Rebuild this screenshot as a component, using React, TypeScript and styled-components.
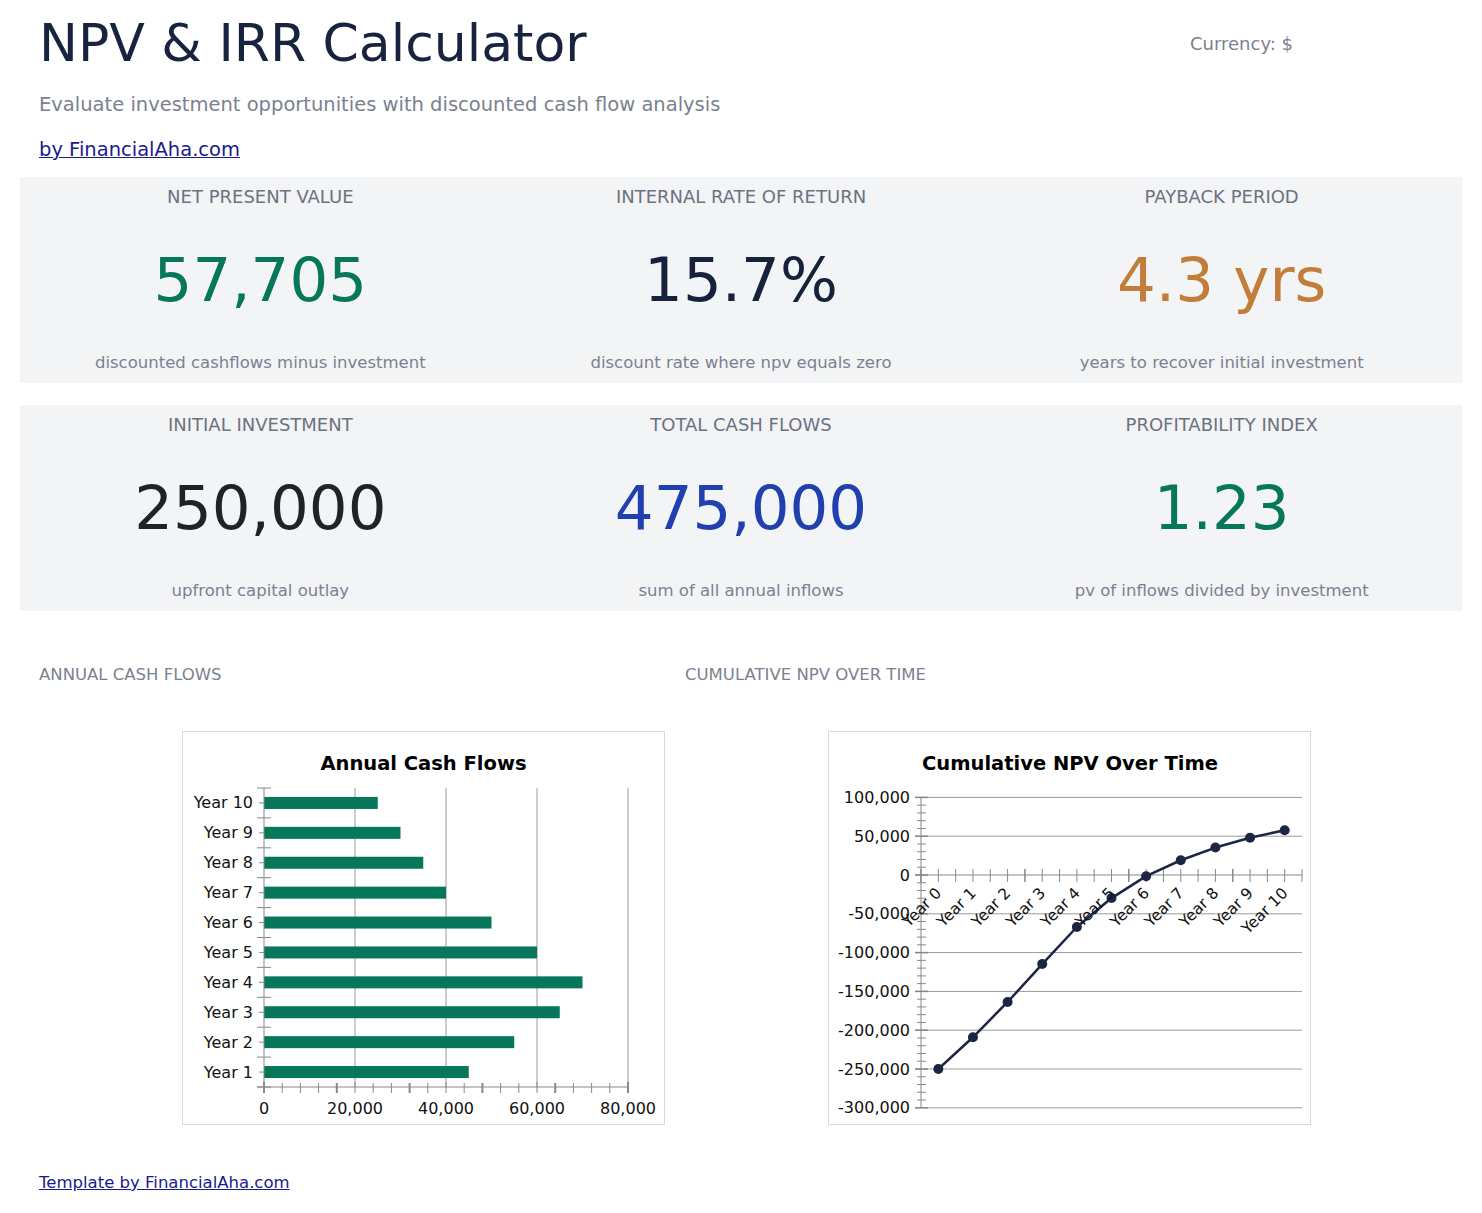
import styled, { createGlobalStyle } from 'styled-components';

const GlobalStyle = createGlobalStyle`
  body {
    margin: 0;
    background: #ffffff;
    font-family: 'DejaVu Sans', Verdana, sans-serif;
  }
`;

const FONT = "'DejaVu Sans', Verdana, sans-serif";

interface Metric {
  label: string;
  value: string;
  note: string;
  color: string;
}

const TOP_METRICS: Metric[] = [
  { label: 'NET PRESENT VALUE', value: '57,705', note: 'discounted cashflows minus investment', color: '#06775a' },
  { label: 'INTERNAL RATE OF RETURN', value: '15.7%', note: 'discount rate where npv equals zero', color: '#16213a' },
  { label: 'PAYBACK PERIOD', value: '4.3 yrs', note: 'years to recover initial investment', color: '#c27d3b' },
];

const BOTTOM_METRICS: Metric[] = [
  { label: 'INITIAL INVESTMENT', value: '250,000', note: 'upfront capital outlay', color: '#1f2226' },
  { label: 'TOTAL CASH FLOWS', value: '475,000', note: 'sum of all annual inflows', color: '#1f40ae' },
  { label: 'PROFITABILITY INDEX', value: '1.23', note: 'pv of inflows divided by investment', color: '#06775a' },
];

const FLOWS = [45000, 55000, 65000, 70000, 60000, 50000, 40000, 35000, 30000, 25000];
const RATE = 0.1;
const INVESTMENT = 250000;

const Page = styled.div`
  padding: 0 20px;
`;

const Header = styled.header`
  padding: 12px 19px 0;
`;

const TitleRow = styled.div`
  display: flex;
  align-items: center;
  justify-content: space-between;
  padding-right: 150px;
`;

const Title = styled.h1`
  margin: 0;
  font-size: 52px;
  line-height: 62px;
  font-weight: 400;
  color: #18233f;
`;

const Currency = styled.span`
  font-size: 18px;
  color: #7a8190;
`;

const Subtitle = styled.p`
  margin: 19px 0 0;
  font-size: 19.5px;
  line-height: 24px;
  color: #7a8190;
`;

const ByLine = styled.a`
  display: inline-block;
  margin-top: 21px;
  font-size: 19.5px;
  line-height: 24px;
  color: #1a1a8c;
  text-decoration: underline;
`;

const MetricRow = styled.section<{ $top: number }>`
  display: grid;
  grid-template-columns: repeat(3, 1fr);
  margin-top: ${(p) => p.$top}px;
  background: #f3f4f6;
  height: 206px;
`;

const MetricCell = styled.div`
  display: flex;
  flex-direction: column;
  align-items: center;
  padding-top: 8px;
`;

const MetricLabel = styled.div`
  font-size: 18px;
  line-height: 24px;
  color: #6b7280;
`;

const MetricValue = styled.div<{ $color: string }>`
  margin-top: 35px;
  font-size: 61px;
  line-height: 72px;
  color: ${(p) => p.$color};
`;

const MetricNote = styled.div`
  margin-top: 36px;
  font-size: 16.5px;
  line-height: 22px;
  color: #7a8190;
`;

const ChartGrid = styled.section`
  display: grid;
  grid-template-columns: 646px 646px;
  margin-top: 53px;
`;

const ChartColumn = styled.div`
  padding: 0 19px;
`;

const SectionLabel = styled.div`
  font-size: 16.5px;
  line-height: 22px;
  color: #7a8190;
`;

const ChartFrame = styled.div`
  margin: 45px 0 0 143px;
  width: 481px;
  height: 392px;
  border: 1px solid #d9d9d9;
  background: #ffffff;

  svg {
    display: block;
    font-family: ${FONT};
  }
`;

const Footer = styled.footer`
  margin-top: 47px;
  padding: 0 19px 20px;
`;

const FooterLink = styled.a`
  font-size: 16.5px;
  line-height: 22px;
  color: #1a1a8c;
  text-decoration: underline;
`;

const fmt = (n: number) => n.toLocaleString('en-US');

const MetricsBlock = ({ items, top }: { items: Metric[]; top: number }) => (
  <MetricRow $top={top}>
    {items.map((m) => (
      <MetricCell key={m.label}>
        <MetricLabel>{m.label}</MetricLabel>
        <MetricValue $color={m.color}>{m.value}</MetricValue>
        <MetricNote>{m.note}</MetricNote>
      </MetricCell>
    ))}
  </MetricRow>
);

const BarChart = () => {
  const x0 = 81;
  const perUnit = 91 / 20000;
  const top = 56;
  const step = 29.9;
  const axisY = 355;
  const rows = FLOWS.map((v, i) => ({ label: `Year ${i + 1}`, value: v })).reverse();

  return (
    <svg width="481" height="392" viewBox="0 0 481 392">
      <text x="240.5" y="38" textAnchor="middle" fontSize="19.5" fontWeight="700" fill="#000">
        Annual Cash Flows
      </text>
      {[1, 2, 3, 4].map((k) => (
        <line key={k} x1={x0 + 91 * k} y1={top} x2={x0 + 91 * k} y2={axisY} stroke="#9a9a9a" strokeWidth="1" />
      ))}
      {rows.map((r, i) => {
        const cy = top + step * (i + 0.5);
        return (
          <g key={r.label}>
            <rect x={x0} y={cy - 6} width={r.value * perUnit} height="12" fill="#06775a" />
            <line x1={x0 - 5} y1={cy} x2={x0} y2={cy} stroke="#888" />
            <text x="70" y={cy + 5.5} textAnchor="end" fontSize="16" fill="#111">
              {r.label}
            </text>
          </g>
        );
      })}
      {Array.from({ length: 11 }, (_, i) => (
        <line key={i} x1={x0 - 7} y1={top + step * i} x2={x0 + 7} y2={top + step * i} stroke="#888" strokeWidth="1" />
      ))}
      <line x1={x0} y1={top} x2={x0} y2={axisY + 5} stroke="#888" />
      <line x1={x0 - 7} y1={axisY} x2={x0 + 91 * 4} y2={axisY} stroke="#888" />
      {Array.from({ length: 21 }, (_, i) => (
        <line
          key={i}
          x1={x0 + i * 18.2}
          y1={i % 5 === 0 ? axisY - 5 : axisY - 4}
          x2={x0 + i * 18.2}
          y2={axisY + 6}
          stroke="#888"
          strokeWidth={i % 4 === 0 ? 2 : 1}
        />
      ))}
      {[0, 20000, 40000, 60000, 80000].map((v) => (
        <text key={v} x={x0 + v * perUnit} y="382" textAnchor="middle" fontSize="16" fill="#111">
          {fmt(v)}
        </text>
      ))}
    </svg>
  );
};

const LineChart = () => {
  const zeroY = 143;
  const perUnit = 38.8 / 50000;
  const axisX = 92;
  const right = 473;
  const cat = (right - axisX) / 11;
  const toY = (v: number) => zeroY - v * perUnit;

  const points: { label: string; value: number }[] = [{ label: 'Year 0', value: -INVESTMENT }];
  let acc = -INVESTMENT;
  FLOWS.forEach((f, i) => {
    acc += f / Math.pow(1 + RATE, i + 1);
    points.push({ label: `Year ${i + 1}`, value: acc });
  });
  const coords = points.map((p, i) => ({ ...p, x: axisX + cat * (i + 0.5), y: toY(p.value) }));
  const ticks = [100000, 50000, 0, -50000, -100000, -150000, -200000, -250000, -300000];

  return (
    <svg width="481" height="392" viewBox="0 0 481 392">
      <text x="241" y="38" textAnchor="middle" fontSize="19.5" fontWeight="700" fill="#000">
        Cumulative NPV Over Time
      </text>
      {ticks.map((t) => (
        <g key={t}>
          {t !== 0 && <line x1="86" y1={toY(t)} x2={right} y2={toY(t)} stroke="#9a9a9a" />}
          <text x="81" y={toY(t) + 5.5} textAnchor="end" fontSize="16" fill="#111">
            {fmt(t)}
          </text>
        </g>
      ))}
      {Array.from({ length: 41 }, (_, i) => {
        const v = 100000 - i * 10000;
        const major = i % 5 === 0;
        return (
          <line
            key={i}
            x1={major ? 86 : 88}
            y1={toY(v)}
            x2={major ? 99 : 97}
            y2={toY(v)}
            stroke="#888"
            strokeWidth={major ? 1.5 : 1}
          />
        );
      })}
      <line x1={axisX} y1={toY(100000)} x2={axisX} y2={toY(-300000)} stroke="#888" />
      <line x1="86" y1={zeroY} x2={right} y2={zeroY} stroke="#888" />
      {Array.from({ length: 23 }, (_, j) => (
        <line
          key={j}
          x1={axisX + (cat / 2) * j}
          y1={zeroY - 6}
          x2={axisX + (cat / 2) * j}
          y2={zeroY + 7}
          stroke="#888"
          strokeWidth={j % 6 === 0 ? 1.5 : 1}
        />
      ))}
      <polyline
        points={coords.map((c) => `${c.x},${c.y}`).join(' ')}
        fill="none"
        stroke="#1c2541"
        strokeWidth="2.5"
        strokeLinejoin="round"
      />
      {coords.map((c) => (
        <circle key={c.label} cx={c.x} cy={c.y} r="5" fill="#1c2541" />
      ))}
      {coords.map((c) => (
        <text
          key={`l-${c.label}`}
          x={c.x + 4}
          y="162"
          textAnchor="end"
          fontSize="15.5"
          fill="#111"
          transform={`rotate(-45 ${c.x + 4} 162)`}
        >
          {c.label}
        </text>
      ))}
    </svg>
  );
};

export default function App() {
  return (
    <>
      <GlobalStyle />
      <Page>
        <Header>
          <TitleRow>
            <Title>NPV &amp; IRR Calculator</Title>
            <Currency>Currency: $</Currency>
          </TitleRow>
          <Subtitle>Evaluate investment opportunities with discounted cash flow analysis</Subtitle>
          <ByLine href="#">by FinancialAha.com</ByLine>
        </Header>

        <MetricsBlock items={TOP_METRICS} top={15} />
        <MetricsBlock items={BOTTOM_METRICS} top={22} />

        <ChartGrid>
          <ChartColumn>
            <SectionLabel>ANNUAL CASH FLOWS</SectionLabel>
            <ChartFrame>
              <BarChart />
            </ChartFrame>
          </ChartColumn>
          <ChartColumn>
            <SectionLabel>CUMULATIVE NPV OVER TIME</SectionLabel>
            <ChartFrame>
              <LineChart />
            </ChartFrame>
          </ChartColumn>
        </ChartGrid>

        <Footer>
          <FooterLink href="#">Template by FinancialAha.com</FooterLink>
        </Footer>
      </Page>
    </>
  );
}
